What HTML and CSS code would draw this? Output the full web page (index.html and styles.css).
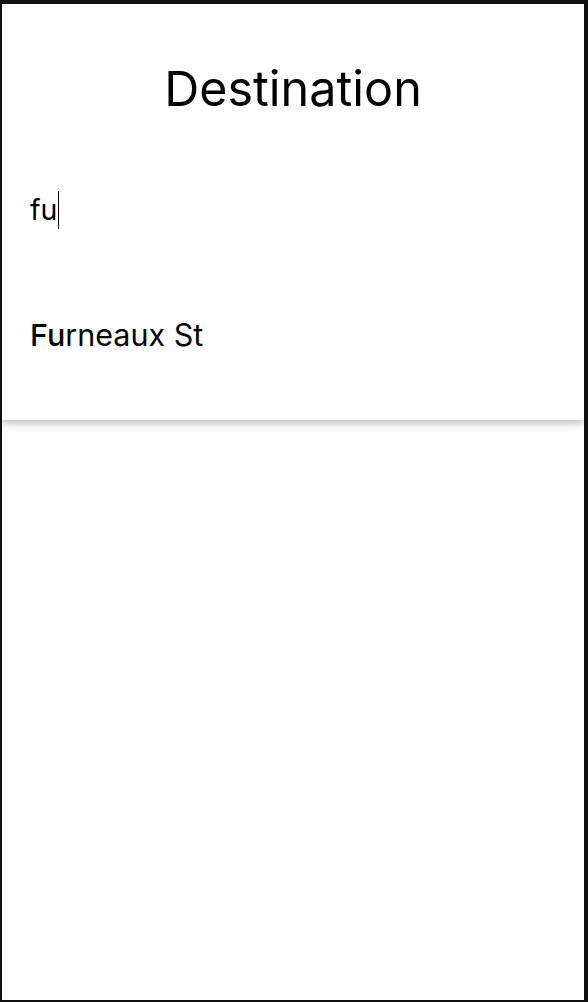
FILE: index.html
```html
<!DOCTYPE html>
<html lang="en">
<head>
<meta charset="utf-8">
<title>Destination</title>
<link rel="stylesheet" href="styles.css">
</head>
<body>
<div class="frame">
  <section class="panel">
    <h1 class="title">Destination</h1>
    <div class="search">
      <span class="query">fu</span><span class="caret"></span>
    </div>
    <ul class="results">
      <li class="result"><span class="match">Fu</span>rneaux St</li>
    </ul>
  </section>
</div>
</body>
</html>
```

FILE: styles.css
```css
html, body {
  margin: 0;
  padding: 0;
  background: #111;
}
body {
  font-family: Inter, "Noto Sans", sans-serif;
  color: #000;
}
.frame {
  box-sizing: border-box;
  height: 1002px;
  border-style: solid;
  border-color: #111;
  border-width: 4px 4px 2px 2px;
  background: #fff;
  overflow: hidden;
}
.panel {
  height: 416px;
  background: #fff;
  box-shadow: 0 3px 8px rgba(0, 0, 0, 0.28);
  position: relative;
  display: flex;
  flex-direction: column;
}
.title {
  margin: 0;
  padding-top: 57px;
  font-size: 48.5px;
  line-height: 56px;
  font-weight: 400;
  text-align: center;
}
.search {
  display: flex;
  align-items: center;
  padding: 0 0 0 28px;
  margin-top: 74px;
  height: 38px;
}
.query {
  font-size: 28.5px;
  line-height: 38px;
}
.caret {
  display: block;
  width: 1px;
  height: 38px;
  background: #000;
  margin-left: 1px;
}
.results {
  list-style: none;
  margin: 88px 0 0;
  padding: 0 0 0 28px;
}
.result {
  font-size: 30.5px;
  line-height: 36px;
}
.match {
  font-weight: 500;
}
```
